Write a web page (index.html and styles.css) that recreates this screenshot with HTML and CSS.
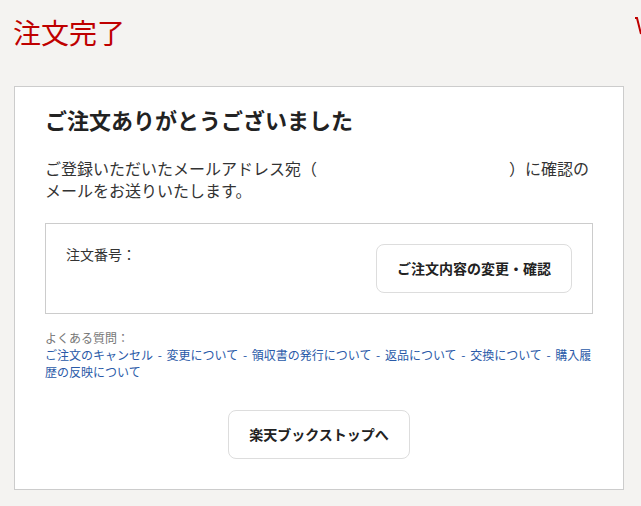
FILE: index.html
```html
<!DOCTYPE html>
<html lang="ja">
<head>
  <meta charset="UTF-8">
  <title>注文完了</title>
  <meta name="viewport" content="width=device-width, initial-scale=1.0">
  <link rel="stylesheet" href="styles.css">
</head>
<body>
  <div class="page-head">
    <h1 class="page-title">注文完了</h1>
    <svg class="logo-edge" width="6" height="18" viewBox="0 0 6 18">
      <path d="M0 1 L2 1 L6 17" fill="none" stroke="#bf0000" stroke-width="2"/>
    </svg>
  </div>

  <div class="card">
    <h2 class="thanks">ご注文ありがとうございました</h2>
    <p class="notice">ご登録いただいたメールアドレス宛（<span class="mail-addr"></span>）に確認のメールをお送りいたします。</p>

    <div class="order-box">
      <div class="order-no">注文番号：</div>
      <a class="btn" href="#">ご注文内容の変更・確認</a>
    </div>

    <div class="faq">
      <div class="faq-label">よくある質問：</div>
      <a href="#">ご注文のキャンセル</a> - <a href="#">変更について</a> - <a href="#">領収書の発行について</a> - <a href="#">返品について</a> - <a href="#">交換について</a> - <a href="#">購入履歴の反映について</a>
    </div>

    <div class="bottom">
      <a class="btn" href="#">楽天ブックストップへ</a>
    </div>
  </div>
</body>
</html>
```

FILE: styles.css
```css
* {
  box-sizing: border-box;
}
body {
  margin: 0;
  background: #f4f3f1;
  font-family: "Noto Sans CJK JP", sans-serif;
  color: #333;
}
.page-head {
  display: flex;
  justify-content: space-between;
  align-items: flex-start;
  padding: 13px 0 0 13px;
  height: 86px;
}
.page-title {
  margin: 0;
  font-size: 28px;
  font-weight: normal;
  line-height: 38px;
  color: #bf0000;
}
.logo-edge {
  margin-top: 4px;
}
.card {
  width: 610px;
  margin-left: 14px;
  background: #fff;
  border: 1px solid #ccc;
  padding: 17px 30px 30px;
}
.thanks {
  margin: 0;
  font-size: 22px;
  line-height: 31px;
  color: #222;
}
.notice {
  margin: 22px 0 22px;
  font-size: 16px;
  line-height: 22px;
}
.mail-addr {
  display: inline-block;
  width: 192px;
}
.order-box {
  display: flex;
  justify-content: space-between;
  align-items: flex-start;
  border: 1px solid #ccc;
  padding: 20px;
}
.order-no {
  font-size: 14px;
  line-height: 21px;
}
.btn {
  display: inline-block;
  padding: 0 20px;
  height: 49px;
  line-height: 47px;
  border: 1px solid #ddd;
  border-radius: 8px;
  background: #fff;
  color: #222;
  font-size: 14px;
  font-weight: bold;
  text-decoration: none;
}
.faq {
  margin-top: 15px;
  font-size: 12px;
  line-height: 17px;
  word-spacing: 2px;
  color: #2a5aa8;
}
.faq-label {
  color: #777;
}
.faq a {
  color: #2a5aa8;
  text-decoration: none;
}
.bottom {
  margin-top: 30px;
  text-align: center;
}
```
